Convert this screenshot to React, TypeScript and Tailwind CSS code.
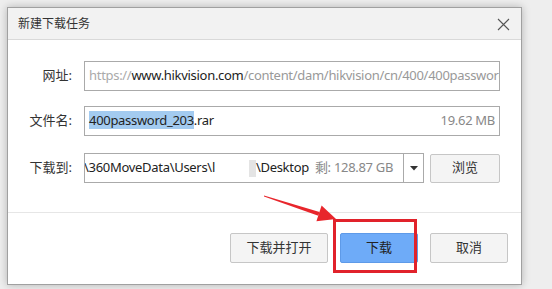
export default function App() {
  const font = { fontFamily: '"Noto Sans", "Noto Sans CJK SC", sans-serif' };

  return (
    <div className="relative w-[552px] h-[289px] overflow-hidden bg-[#eeeeee]" style={font}>
      <div className="ml-[7px] mt-[7px] w-[515px] border border-[#a0a0a0] bg-white shadow-[0_0_8px_rgba(0,0,0,0.25)]">
        {/* title bar */}
        <div className="h-[32px] flex items-center justify-between bg-[#f2f2f2] border-b border-[#d9d9d9] pl-[10px] pr-[11px]">
          <span className="text-[12px] text-[#333]">新建下载任务</span>
          <svg width="13" height="13" viewBox="0 0 13 13" className="mt-[2px]">
            <path d="M1 1 L12 12 M12 1 L1 12" stroke="#555" strokeWidth="1.1" />
          </svg>
        </div>

        {/* form */}
        <div className="pt-[21px] pb-[29px] border-b border-[#e6e6e6] text-[13px]">
          <div className="flex items-center h-[30px]">
            <div className="w-[64px] text-right text-[#333]">网址:</div>
            <div className="ml-[12px] w-[416px] h-[30px] border border-[#aaaaaa] flex items-center pl-[4px] overflow-hidden whitespace-nowrap tracking-[-0.3px]">
              <span className="text-[#aaaaaa]">https://</span>
              <span className="text-[#222]">www.hikvision.com</span>
              <span className="text-[#999999]">/content/dam/hikvision/cn/400/400password_203.rar</span>
            </div>
          </div>

          <div className="flex items-center h-[30px] mt-[15px]">
            <div className="w-[64px] text-right text-[#333]">文件名:</div>
            <div className="ml-[12px] w-[416px] h-[30px] border border-[#aaaaaa] flex items-center justify-between pl-[4px] pr-[4px] whitespace-nowrap tracking-[-0.3px]">
              <span className="text-[#222]">
                <span className="bg-[#a3cbf0]">400password_203</span>.rar
              </span>
              <span className="text-[#888]">19.62 MB</span>
            </div>
          </div>

          <div className="flex items-center h-[30px] mt-[17px]">
            <div className="w-[64px] text-right text-[#333]">下载到:</div>
            <div className="ml-[12px] w-[340px] h-[30px] border border-[#aaaaaa] flex">
              <div className="flex-1 flex items-center overflow-hidden whitespace-nowrap border-r border-[#aaaaaa] tracking-[-0.3px]">
                <span className="ml-[-1px] text-[#222]">\360MoveData\Users\l</span>
                <span className="w-[34px]" />
                <span className="w-[7px] h-[17px] bg-[#e4e4e4]" />
                <span className="text-[#222]">\Desktop</span>
                <span className="ml-[6px] text-[#888]">剩: 128.87 GB</span>
              </div>
              <div className="w-[19px] flex items-center justify-center">
                <svg width="8" height="5" viewBox="0 0 8 5">
                  <path d="M0 0 L8 0 L4 4.5 Z" fill="#333" />
                </svg>
              </div>
            </div>
            <div className="ml-[6px] w-[70px] h-[29px] rounded-[2px] border border-[#c6c6c6] bg-[#f4f4f4] flex items-center justify-center text-[#333]">
              浏览
            </div>
          </div>
        </div>

        {/* footer */}
        <div className="flex justify-end gap-[12px] pt-[20px] pb-[21px] pr-[13px] text-[13px]">
          <div className="w-[98px] h-[30px] rounded-[2px] border border-[#c6c6c6] bg-[#f4f4f4] flex items-center justify-center text-[#333]">
            下载并打开
          </div>
          <div className="w-[78px] h-[30px] rounded-[2px] border border-[#5e9ae8] bg-[#6eabf8] flex items-center justify-center text-[#222]">
            下载
          </div>
          <div className="w-[78px] h-[30px] rounded-[2px] border border-[#c6c6c6] bg-[#f4f4f4] flex items-center justify-center text-[#333]">
            取消
          </div>
        </div>
      </div>

      {/* annotation: red box + arrow */}
      <div className="absolute left-[333px] top-[219px] w-[84px] h-[54px] border-[3px] border-[#e1222b]" />
      <svg className="absolute left-0 top-0 pointer-events-none" width="552" height="289" viewBox="0 0 552 289">
        <polygon points="264,195.5 319.5,212 318.3,215.8 264,196.5" fill="#e8262c" />
        <polygon points="336,219 316.4,221.3 321.6,205.6" fill="#e8262c" />
      </svg>
    </div>
  );
}
